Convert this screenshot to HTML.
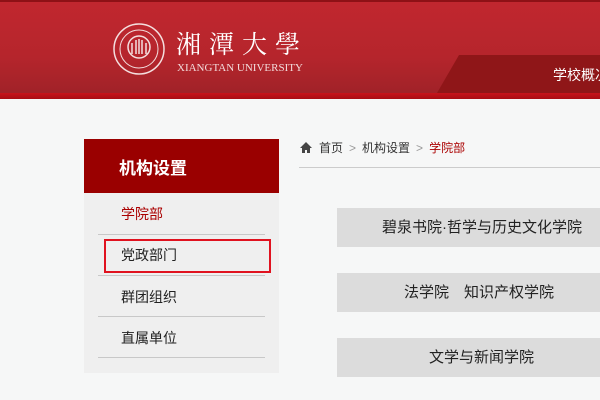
<!DOCTYPE html>
<html><head><meta charset="utf-8"><style>
*{margin:0;padding:0;box-sizing:border-box}
body{width:600px;height:400px;overflow:hidden;background:#f6f7f7;font-family:"Liberation Sans","Noto Sans CJK SC",sans-serif;position:relative}
.hdr{position:absolute;left:0;top:0;width:600px;height:94px;background:linear-gradient(180deg,#c1272f 0%,#b5252c 60%,#a02228 100%);border-top:2px solid #8e1116}
.redline{position:absolute;left:0;top:93px;width:600px;height:6px;background:linear-gradient(#c8141c,#a80d14)}
.nav{position:absolute;left:437px;top:55px;width:170px;height:38px;background:#8f1618;clip-path:polygon(22px 0,100% 0,100% 100%,0 100%);border-top-left-radius:10px}
.nav span{position:absolute;left:116px;top:10px;color:#fff;font-size:14px;white-space:nowrap}
.logo{position:absolute;left:113px;top:23px}
.cn{position:absolute;left:176px;top:25px;color:#fff;font-family:"Noto Serif CJK SC",serif;font-size:25px;letter-spacing:8px;white-space:nowrap}
.en{position:absolute;left:177px;top:62px;color:#f2dada;font-family:"Liberation Serif",serif;font-size:11px;white-space:nowrap}
.side{position:absolute;left:84px;top:139px;width:195px;height:234px;background:#efefef}
.sh{height:54px;background:#9a0000;color:#fff;font-size:17px;font-weight:bold;padding:15px 0 0 35px}
.it{position:absolute;left:14px;width:167px;border-bottom:1px solid #c8c8c8;font-size:14px;color:#222;padding-left:23px}
.box{position:absolute;left:20px;top:100px;width:167px;height:34px;border:2px solid #e0121f}
.bc{position:absolute;left:319px;top:139px;font-size:12px;color:#333;white-space:nowrap}
.bc b{font-weight:normal;color:#999;margin:0 6px}
.line{position:absolute;left:299px;top:167px;width:301px;height:1px;background:#ccc}
.btn{position:absolute;left:337px;width:270px;height:39px;background:#dcdcdc;font-size:15px;color:#222;line-height:39px;white-space:nowrap}
</style></head><body>
<div class="hdr"></div>
<div class="redline"></div>
<div class="nav"><span>学校概况</span></div>
<svg class="logo" width="52" height="52" viewBox="0 0 52 52"><circle cx="26" cy="26" r="25" fill="none" stroke="#f4dede" stroke-width="1.5"/><circle cx="26" cy="26" r="19" fill="none" stroke="#f4dede" stroke-width="1"/><circle cx="26" cy="24" r="11" fill="none" stroke="#f4dede" stroke-width="1.5"/><path d="M19 31V20M23 31V17M26 31V16M29 31V17M33 31V20" stroke="#f4dede" stroke-width="1.5"/></svg>
<div class="cn">湘潭大學</div>
<div class="en">XIANGTAN UNIVERSITY</div>
<div class="side"><div class="sh">机构设置</div>
<div class="it" style="top:65px;height:31px;color:#a00">学院部</div>
<div class="it" style="top:106px;height:31px">党政部门</div>
<div class="it" style="top:148px;height:30px">群团组织</div>
<div class="it" style="top:189px;height:30px">直属单位</div>
<div class="box"></div>
</div>
<svg style="position:absolute;left:299px;top:141px" width="14" height="13" viewBox="0 0 14 13"><path d="M7 1L1 7h2v5h3V9h2v3h3V7h2z" fill="#444"/></svg>
<div class="bc">首页<b>&gt;</b>机构设置<b>&gt;</b><span style="color:#a00">学院部</span></div>
<div class="line"></div>
<div class="btn" style="top:208px;padding-left:45px">碧泉书院·哲学与历史文化学院</div>
<div class="btn" style="top:273px;padding-left:67px">法学院　知识产权学院</div>
<div class="btn" style="top:338px;padding-left:92px">文学与新闻学院</div>
</body></html>
